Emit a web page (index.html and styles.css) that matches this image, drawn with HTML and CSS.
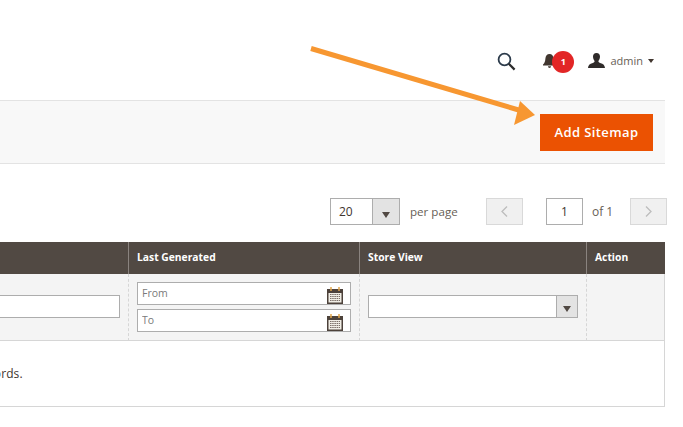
FILE: index.html

```html
<!DOCTYPE html>
<html lang="en">
<head>
  <meta charset="UTF-8">
  <title>Sitemap</title>
  <link rel="stylesheet" href="styles.css">
</head>
<body>
  <div class="page">
    <header class="top-bar">
      <svg class="search-icon" width="19" height="19" viewBox="0 0 19 19">
        <circle cx="7.5" cy="7.5" r="5.9" fill="none" stroke="#2b3a4a" stroke-width="1.8"/>
        <path d="M11.8 11.8L17.6 17.6" stroke="#2b2b2b" stroke-width="2.2"/>
      </svg>
      <div class="notify">
        <svg width="13" height="14" viewBox="0 0 13 14">
          <path d="M6.5 0C4 0 2.6 2 2.4 4.5C2.2 7.5 1.6 9 0 10.6V11.5H13V10.6C11.4 9 10.8 7.5 10.6 4.5C10.4 2 9 0 6.5 0Z" fill="#41362f"/>
          <path d="M5 12.3H8C8 13.3 7.3 14 6.5 14C5.7 14 5 13.3 5 12.3Z" fill="#41362f"/>
        </svg>
        <span class="badge">1</span>
      </div>
      <div class="user">
        <svg width="17" height="15" viewBox="0 0 17 15">
          <path d="M8.5 0C6.2 0 5 1.6 5 3.6C5 5.4 5.7 7 6.6 8C6.6 9.2 6 9.7 4.2 10.3C2 11 .5 11.6 0 15H17C16.5 11.6 15 11 12.8 10.3C11 9.7 10.4 9.2 10.4 8C11.3 7 12 5.4 12 3.6C12 1.6 10.8 0 8.5 0Z" fill="#2f2b2a"/>
        </svg>
        <span class="user-name">admin</span>
        <span class="caret"></span>
      </div>
    </header>

    <div class="actions">
      <button class="add-btn">Add Sitemap</button>
    </div>

    <div class="pager">
      <div class="select per-page">
        <span class="select-value">20</span>
        <span class="select-arrow"><span class="arrow-down"></span></span>
      </div>
      <span class="per-page-label">per page</span>
      <button class="page-btn prev">
        <svg width="7" height="11" viewBox="0 0 7 11"><path d="M6 .5L1 5.5L6 10.5" fill="none" stroke="#bdbdbd" stroke-width="1.3"/></svg>
      </button>
      <input class="page-input" type="text" value="1">
      <span class="page-total">of 1</span>
      <button class="page-btn next">
        <svg width="7" height="11" viewBox="0 0 7 11"><path d="M1 .5L6 5.5L1 10.5" fill="none" stroke="#bdbdbd" stroke-width="1.3"/></svg>
      </button>
    </div>

    <div class="grid">
      <div class="grid-head"></div>
      <div class="grid-head">Last Generated</div>
      <div class="grid-head">Store View</div>
      <div class="grid-head">Action</div>

      <div class="grid-filter filter-first">
        <input class="text-input first-input" type="text">
      </div>
      <div class="grid-filter filter-dates">
        <div class="date-field">
          <input class="text-input" type="text" placeholder="From">
          <svg class="cal-icon" width="18" height="17" viewBox="0 0 18 17">
            <rect x="1" y="2" width="16" height="15" fill="#4d423b"/>
            <rect x="2.5" y="6" width="13" height="9.5" fill="#f1eee6"/>
            <path d="M4 7.5H14M4 9.5H14M4 11.5H14M4 13.5H14" stroke="#7b6f68" stroke-width="1.2" stroke-dasharray="1.5 .7"/>
            <path d="M5 0V4M13 0V4" stroke="#e2a64c" stroke-width="1.5"/>
          </svg>
        </div>
        <div class="date-field">
          <input class="text-input" type="text" placeholder="To">
          <svg class="cal-icon" width="18" height="17" viewBox="0 0 18 17">
            <rect x="1" y="2" width="16" height="15" fill="#4d423b"/>
            <rect x="2.5" y="6" width="13" height="9.5" fill="#f1eee6"/>
            <path d="M4 7.5H14M4 9.5H14M4 11.5H14M4 13.5H14" stroke="#7b6f68" stroke-width="1.2" stroke-dasharray="1.5 .7"/>
            <path d="M5 0V4M13 0V4" stroke="#e2a64c" stroke-width="1.5"/>
          </svg>
        </div>
      </div>
      <div class="grid-filter filter-store">
        <div class="select store-select">
          <span class="select-value"></span>
          <span class="select-arrow"><span class="arrow-down"></span></span>
        </div>
      </div>
      <div class="grid-filter"></div>

      <div class="grid-empty"><span class="empty-text">We couldn't find any records.</span></div>
    </div>

    <svg class="arrow-note" width="240" height="90" viewBox="0 0 240 90">
      <path d="M1 5.5L212 68" stroke="#f79731" stroke-width="5" fill="none"/>
      <path d="M210 58L204 82L225 72Z" fill="#f79731"/>
    </svg>
  </div>
</body>
</html>
```

FILE: styles.css

```css
* {
  box-sizing: border-box;
}
body {
  margin: 0;
  background: white;
  font-family: 'Open Sans', sans-serif;
  color: #41362f;
  overflow: hidden;
}
.page {
  position: relative;
  width: 667px;
  height: 427px;
  overflow: hidden;
}
.top-bar {
  height: 100px;
  width: 665px;
  display: flex;
  align-items: flex-start;
  padding: 51px 11px 0 0;
  justify-content: flex-end;
}
.search-icon {
  margin: 1px 27px 0 0;
}
.notify {
  position: relative;
  width: 31px;
  height: 22px;
  margin-right: 14px;
}
.notify svg {
  position: absolute;
  left: 0;
  top: 3px;
}
.badge {
  position: absolute;
  left: 9px;
  top: 0;
  width: 22px;
  height: 22px;
  border-radius: 50%;
  background: #e22626;
  color: white;
  font-size: 9px;
  font-weight: 700;
  line-height: 22px;
  text-align: center;
}
.user {
  display: flex;
  align-items: center;
  height: 19px;
}
.user-name {
  margin-left: 5px;
  font-size: 11px;
  color: #676056;
}
.caret {
  margin-left: 5px;
  border-left: 3.5px solid transparent;
  border-right: 3.5px solid transparent;
  border-top: 4px solid #41362f;
}
.actions {
  width: 665px;
  height: 64px;
  background: #f8f8f8;
  border-top: 1px solid #e3e3e3;
  border-bottom: 1px solid #e3e3e3;
  display: flex;
  justify-content: flex-end;
  align-items: center;
  padding-right: 12px;
}
.add-btn {
  width: 113px;
  height: 37px;
  border: none;
  background: #eb5202;
  color: white;
  font-family: 'Open Sans', sans-serif;
  font-size: 13px;
  font-weight: 600;
  letter-spacing: .4px;
}
.pager {
  display: flex;
  align-items: center;
  height: 27px;
  margin-top: 34px;
  padding-left: 330px;
  font-size: 11.6px;
  color: #676056;
}
.select {
  display: flex;
  background: white;
  border: 1px solid #adadad;
}
.select-value {
  flex: 1;
  padding-left: 8px;
  color: #41362f;
}
.select-arrow {
  display: flex;
  align-items: center;
  justify-content: center;
  background: #e3e3e3;
  border-left: 1px solid #adadad;
}
.arrow-down {
  margin-top: 6px;
  border-left: 4.5px solid transparent;
  border-right: 4.5px solid transparent;
  border-top: 6px solid #514943;
}
.per-page {
  width: 70px;
  height: 27px;
  line-height: 25px;
  font-size: 12px;
  color: #41362f;
}
.per-page .select-arrow {
  width: 27px;
}
.per-page-label {
  margin-left: 10px;
  width: 76px;
}
.page-btn {
  width: 37px;
  height: 27px;
  padding: 0;
  display: flex;
  align-items: center;
  justify-content: center;
  background: #f0f0f0;
  border: 1px solid #d9d9d9;
}
.page-input {
  width: 37px;
  height: 27px;
  margin-left: 23px;
  border: 1px solid #adadad;
  font-family: 'Open Sans', sans-serif;
  font-size: 12px;
  color: #41362f;
  text-align: center;
  padding: 0;
}
.page-total {
  margin-left: 9px;
  width: 38px;
  font-size: 12px;
}
.grid {
  display: grid;
  grid-template-columns: 128px 231px 227px 79px;
  width: 665px;
  margin-top: 17px;
}
.grid-head {
  height: 32px;
  background: #514943;
  border-left: 1px solid #8a837f;
  color: white;
  font-size: 10.3px;
  font-weight: 700;
  line-height: 31px;
  padding-left: 8px;
}
.grid-head:first-child {
  border-left: none;
}
.grid-filter {
  height: 67px;
  background: #f4f4f4;
  border-left: 1px dashed #d6d6d6;
  border-bottom: 1px solid #d6d6d6;
}
.grid-filter:nth-child(4n) {
  border-right: 1px solid #d6d6d6;
}
.filter-first {
  border-left: none;
  padding-top: 21px;
}
.text-input {
  display: block;
  width: 100%;
  height: 23px;
  border: 1px solid #adadad;
  background: white;
  padding: 0 4px 2px;
  font-family: 'Open Sans', sans-serif;
  font-size: 10.5px;
}
.text-input::placeholder {
  color: #7a7a7a;
}
.first-input {
  width: 120px;
  border-left: none;
}
.filter-dates {
  display: flex;
  flex-direction: column;
  gap: 4px;
  padding: 8px 8px 0;
}
.date-field {
  position: relative;
  width: 214px;
}
.cal-icon {
  position: absolute;
  right: 7px;
  top: 5px;
}
.filter-store {
  padding: 21px 0 0 8px;
}
.store-select {
  width: 210px;
  height: 23px;
}
.store-select .select-arrow {
  width: 21px;
}
.store-select .arrow-down {
  margin-top: 4px;
}
.grid-empty {
  grid-column: 1 / -1;
  height: 66px;
  border-bottom: 1px solid #d6d6d6;
  border-right: 1px solid #d6d6d6;
  display: flex;
  align-items: center;
  font-size: 12px;
  letter-spacing: .1px;
  color: #41362f;
}
.empty-text {
  margin-left: -143px;
}
.arrow-note {
  position: absolute;
  left: 310px;
  top: 43px;
}
```
